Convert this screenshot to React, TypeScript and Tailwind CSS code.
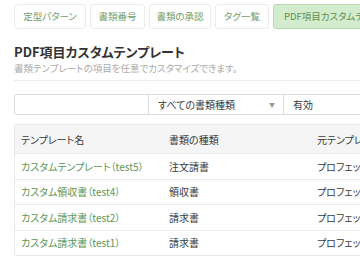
import React from 'react';

const tabs = [
  { label: '定型パターン', w: 'w-[72px]' },
  { label: '書類番号', w: 'w-[55px]' },
  { label: '書類の承認', w: 'w-[62px]' },
  { label: 'タグ一覧', w: 'w-[54px]' },
];

const rows = [
  { name: 'カスタムテンプレート（test5）', kind: '注文請書' },
  { name: 'カスタム領収書（test4）', kind: '領収書' },
  { name: 'カスタム請求書（test2）', kind: '請求書' },
  { name: 'カスタム請求書（test1）', kind: '請求書' },
];

export default function App() {
  return (
    <div
      className="h-[270px] w-[360px] overflow-hidden bg-white pl-[14px] text-[10px] text-[#3a3a3a] [font-family:'Noto_Sans_CJK_JP','Liberation_Sans',sans-serif] [font-feature-settings:'palt']"
    >
      {/* tabs */}
      <div className="mt-[4px] flex gap-[4px] whitespace-nowrap">
        {tabs.map((t) => (
          <div
            key={t.label}
            className={`${t.w} flex h-[25px] shrink-0 items-center justify-center rounded-[3px] border border-[#ececec] bg-white text-[9.5px] text-[#72a068]`}
          >
            {t.label}
          </div>
        ))}
        <div className="flex h-[25px] w-[110px] shrink-0 items-center rounded-[3px] border border-[#b9dbb1] bg-[#d3ecce] pl-[10px] text-[9.5px] text-[#5b8f51]">
          PDF項目カスタムテンプレート
        </div>
      </div>

      {/* heading */}
      <div className="mt-[15px] text-[13px] leading-[16px] font-bold text-[#333]">PDF項目カスタムテンプレート</div>
      <div className="mt-[2px] text-[9.5px] leading-[13px] text-[#aaa]">書類テンプレートの項目を任意でカスタマイズできます。</div>
      <div className="mt-[5px] h-px bg-[#ececec]" />

      {/* filters */}
      <div className="mt-[13px] flex h-[21px] w-[400px] rounded-[3px] border border-[#dcdcdc]">
        <div className="w-[134px] shrink-0 border-r border-[#dcdcdc]" />
        <div className="flex w-[135px] shrink-0 items-center justify-between border-r border-[#dcdcdc] pr-[8px] pl-[9px]">
          <span>すべての書類種類</span>
          <span className="text-[6px] text-[#999]">▼</span>
        </div>
        <div className="flex items-center pl-[9px]">有効</div>
      </div>

      {/* table */}
      <div className="mt-[9px] w-[420px] overflow-hidden rounded-[2px] border border-[#e8e8e8]">
        <div className="flex h-[28px] items-center bg-[#f5f5f5]">
          <div className="w-[148px] shrink-0 pl-[6px]">テンプレート名</div>
          <div className="w-[148px] shrink-0 pl-[6px]">書類の種類</div>
          <div className="pl-[6px]">元テンプレート</div>
        </div>
        {rows.map((r) => (
          <div key={r.name} className="flex h-[25.5px] items-center border-t border-[#ececec]">
            <div className="w-[148px] shrink-0 pl-[6px] text-[#5e9653]">{r.name}</div>
            <div className="w-[148px] shrink-0 pl-[6px]">{r.kind}</div>
            <div className="pl-[6px]">プロフェッショナル</div>
          </div>
        ))}
      </div>
    </div>
  );
}
